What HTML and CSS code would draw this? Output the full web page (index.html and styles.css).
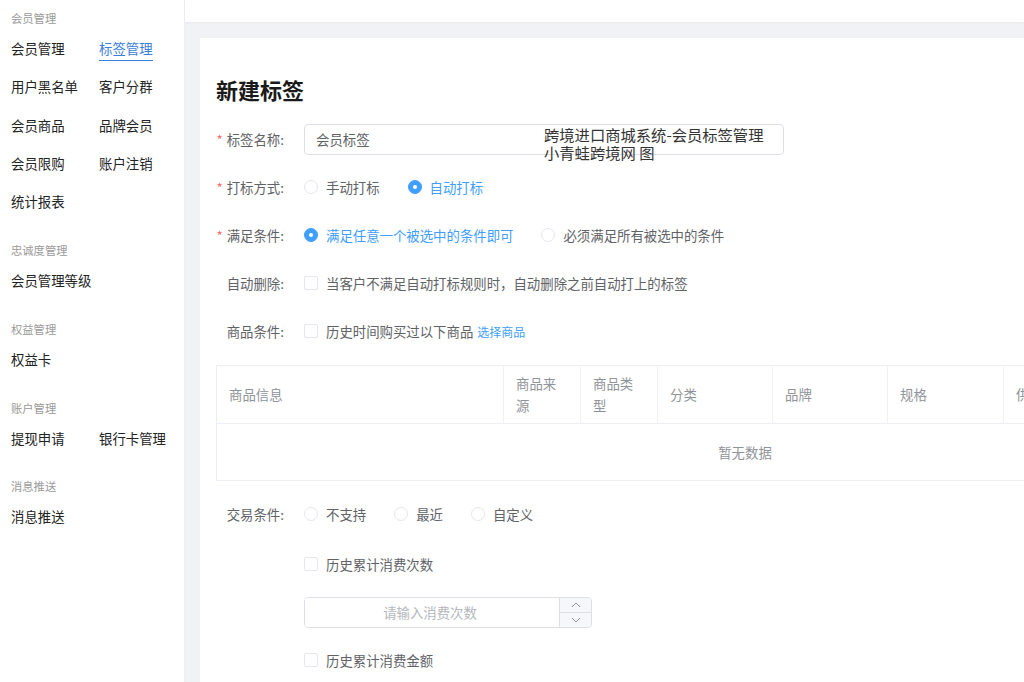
FILE: index.html
```html
<!DOCTYPE html>
<html lang="zh-CN">
<head>
  <meta charset="UTF-8" />
  <title>新建标签</title>
  <link rel="stylesheet" href="styles.css">
</head>
<body>
  <div class="layout">
    <aside class="sidebar">
      <div class="nav-group">
        <div class="nav-title">会员管理</div>
        <div class="nav-items">
          <a class="nav-item">会员管理</a>
          <a class="nav-item active"><span>标签管理</span></a>
          <a class="nav-item">用户黑名单</a>
          <a class="nav-item">客户分群</a>
          <a class="nav-item">会员商品</a>
          <a class="nav-item">品牌会员</a>
          <a class="nav-item">会员限购</a>
          <a class="nav-item">账户注销</a>
          <a class="nav-item">统计报表</a>
        </div>
      </div>
      <div class="nav-group">
        <div class="nav-title">忠诚度管理</div>
        <div class="nav-items">
          <a class="nav-item wide">会员管理等级</a>
        </div>
      </div>
      <div class="nav-group">
        <div class="nav-title">权益管理</div>
        <div class="nav-items">
          <a class="nav-item">权益卡</a>
        </div>
      </div>
      <div class="nav-group">
        <div class="nav-title">账户管理</div>
        <div class="nav-items">
          <a class="nav-item">提现申请</a>
          <a class="nav-item">银行卡管理</a>
        </div>
      </div>
      <div class="nav-group">
        <div class="nav-title">消息推送</div>
        <div class="nav-items">
          <a class="nav-item">消息推送</a>
        </div>
      </div>
    </aside>

    <main class="main">
      <div class="topbar"></div>
      <div class="content">
        <div class="card">
          <h1 class="page-title">新建标签</h1>

          <div class="form-row">
            <label class="form-label required">标签名称:</label>
            <div class="form-control">
              <input class="text-input" type="text" value="会员标签" />
              <div class="watermark">跨境进口商城系统-会员标签管理<br />小青蛙跨境网 图</div>
            </div>
          </div>

          <div class="form-row">
            <label class="form-label required">打标方式:</label>
            <div class="form-control">
              <span class="radio"><i></i>手动打标</span>
              <span class="radio checked"><i></i>自动打标</span>
            </div>
          </div>

          <div class="form-row">
            <label class="form-label required">满足条件:</label>
            <div class="form-control">
              <span class="radio checked"><i></i>满足任意一个被选中的条件即可</span>
              <span class="radio"><i></i>必须满足所有被选中的条件</span>
            </div>
          </div>

          <div class="form-row">
            <label class="form-label">自动删除:</label>
            <div class="form-control">
              <span class="checkbox"><i></i>当客户不满足自动打标规则时，自动删除之前自动打上的标签</span>
            </div>
          </div>

          <div class="form-row">
            <label class="form-label">商品条件:</label>
            <div class="form-control">
              <span class="checkbox"><i></i>历史时间购买过以下商品</span>
              <a class="link">选择商品</a>
            </div>
          </div>

          <table class="goods-table">
            <colgroup>
              <col style="width:287px" />
              <col style="width:77px" />
              <col style="width:77px" />
              <col style="width:115px" />
              <col style="width:115px" />
              <col style="width:116px" />
              <col style="width:116px" />
              <col />
            </colgroup>
            <thead>
              <tr>
                <th>商品信息</th>
                <th>商品来源</th>
                <th>商品类型</th>
                <th>分类</th>
                <th>品牌</th>
                <th>规格</th>
                <th>供应商</th>
                <th>操作</th>
              </tr>
            </thead>
            <tbody>
              <tr>
                <td class="empty" colspan="8">暂无数据</td>
              </tr>
            </tbody>
          </table>

          <div class="form-row trade">
            <label class="form-label">交易条件:</label>
            <div class="form-control">
              <span class="radio"><i></i>不支持</span>
              <span class="radio"><i></i>最近</span>
              <span class="radio"><i></i>自定义</span>
            </div>
          </div>

          <div class="form-row">
            <label class="form-label"></label>
            <div class="form-control">
              <span class="checkbox"><i></i>历史累计消费次数</span>
            </div>
          </div>

          <div class="form-row">
            <label class="form-label"></label>
            <div class="form-control">
              <div class="number-input">
                <input type="text" placeholder="请输入消费次数" />
                <div class="steps">
                  <span class="step">
                    <svg width="10" height="6" viewBox="0 0 10 6"><polyline points="1,5 5,1 9,5" fill="none" stroke="#909399" stroke-width="1"/></svg>
                  </span>
                  <span class="step">
                    <svg width="10" height="6" viewBox="0 0 10 6"><polyline points="1,1 5,5 9,1" fill="none" stroke="#909399" stroke-width="1"/></svg>
                  </span>
                </div>
              </div>
            </div>
          </div>

          <div class="form-row">
            <label class="form-label"></label>
            <div class="form-control">
              <span class="checkbox"><i></i>历史累计消费金额</span>
            </div>
          </div>
        </div>
      </div>
    </main>
  </div>
</body>
</html>
```

FILE: styles.css
```css
body {
  margin: 0;
  font-family: "Noto Sans CJK SC", "Noto Sans", sans-serif;
  color: #303133;
  background: #fff;
}

.layout {
  display: flex;
  height: 682px;
  overflow: hidden;
}

/* sidebar */
.sidebar {
  width: 185px;
  flex-shrink: 0;
  box-sizing: border-box;
  padding: 8px 0 0 11px;
  border-right: 1px solid #eef0f2;
  background: #fff;
}

.nav-group + .nav-group {
  margin-top: 19.5px;
}

.nav-title {
  font-size: 11.3px;
  line-height: 21px;
  color: #9a9a9a;
}

.nav-items {
  display: grid;
  grid-template-columns: 88px 88px;
}

.nav-item {
  height: 38.3px;
  line-height: 38px;
  font-size: 13.4px;
  color: #222;
  white-space: nowrap;
}

.nav-item.wide {
  grid-column: span 2;
}

.nav-item.active {
  color: #3a7fd9;
}

.nav-item.active span {
  position: relative;
  display: inline-block;
}

.nav-item.active span::after {
  content: "";
  position: absolute;
  left: 0;
  right: 0;
  top: calc(50% + 12px);
  height: 1px;
  background: #3a7fd9;
}

/* main */
.main {
  flex: 1;
  min-width: 0;
  display: flex;
  flex-direction: column;
  background: #f0f2f5;
}

.topbar {
  height: 22px;
  flex-shrink: 0;
  background: #fff;
  box-shadow: 0 1px 2px rgba(0, 0, 0, 0.04);
}

.content {
  flex: 1;
  padding: 16px 0 0 15px;
  overflow: hidden;
}

.card {
  width: 1100px;
  height: 100%;
  box-sizing: border-box;
  padding: 38px 16px 0;
  background: #fff;
}

.page-title {
  margin: 0 0 20px;
  font-size: 22px;
  line-height: 27px;
  font-weight: bold;
  color: #1a1a1a;
}

/* form */
.form-row {
  display: flex;
  align-items: center;
  height: 32px;
  margin-bottom: 16px;
}

.form-row.trade {
  margin-bottom: 18px;
}

.form-label {
  width: 88px;
  flex-shrink: 0;
  box-sizing: border-box;
  padding-right: 20px;
  text-align: right;
  font-size: 13.4px;
  color: #606266;
  white-space: nowrap;
}

.form-label.required::before {
  content: "*";
  color: #f56c6c;
  margin-right: 4px;
}

.form-control {
  position: relative;
  display: flex;
  align-items: center;
  font-size: 13.4px;
  color: #606266;
}

.text-input {
  width: 480px;
  height: 31px;
  box-sizing: border-box;
  padding: 0 11px;
  border: 1px solid #dcdfe6;
  border-radius: 4px;
  font-family: inherit;
  font-size: 13.4px;
  color: #606266;
  outline: none;
}

.watermark {
  position: absolute;
  left: 240px;
  top: 1px;
  font-size: 15.3px;
  line-height: 18px;
  color: #333;
  white-space: nowrap;
}

.radio,
.checkbox {
  display: inline-flex;
  align-items: center;
  margin-right: 28px;
  white-space: nowrap;
}

.radio i,
.checkbox i {
  width: 14px;
  height: 14px;
  box-sizing: border-box;
  margin-right: 8px;
  border: 1px solid #e4e7ed;
  background: #fff;
}

.radio i {
  border-radius: 50%;
}

.checkbox i {
  border-radius: 2px;
}

.checkbox {
  margin-right: 4px;
}

.radio.checked {
  color: #409eff;
}

.radio.checked i {
  position: relative;
  border-color: #409eff;
  background: #409eff;
}

.radio.checked i::after {
  content: "";
  position: absolute;
  left: 4px;
  top: 4px;
  width: 4px;
  height: 4px;
  border-radius: 50%;
  background: #fff;
}

.link {
  font-size: 12px;
  color: #409eff;
}

/* table */
.goods-table {
  width: 1058px;
  margin: 18px 0 17px;
  table-layout: fixed;
  border-collapse: collapse;
  border: 1px solid #ebeef5;
  font-size: 13.4px;
}

.goods-table th {
  height: 58px;
  box-sizing: border-box;
  padding: 0 12px 2px;
  text-align: left;
  font-weight: normal;
  line-height: 22px;
  color: #909399;
  border-right: 1px solid #f0f1f4;
  border-bottom: 1px solid #ebeef5;
}

.goods-table .empty {
  height: 54px;
  text-align: center;
  color: #909399;
}

/* number input */
.number-input {
  display: flex;
  width: 288px;
  height: 31px;
  box-sizing: border-box;
  border: 1px solid #dcdfe6;
  border-radius: 4px;
  overflow: hidden;
}

.number-input input {
  flex: 1;
  min-width: 0;
  padding: 0 24px 0 20px;
  border: none;
  outline: none;
  text-align: center;
  font-family: inherit;
  font-size: 13.4px;
  color: #606266;
}

.number-input input::placeholder {
  color: #b4b7bd;
}

.steps {
  width: 31px;
  display: flex;
  flex-direction: column;
  border-left: 1px solid #dcdfe6;
  background: #f5f7fa;
}

.step {
  flex: 1;
  display: flex;
  align-items: center;
  justify-content: center;
}

.step + .step {
  border-top: 1px solid #dcdfe6;
}
```
